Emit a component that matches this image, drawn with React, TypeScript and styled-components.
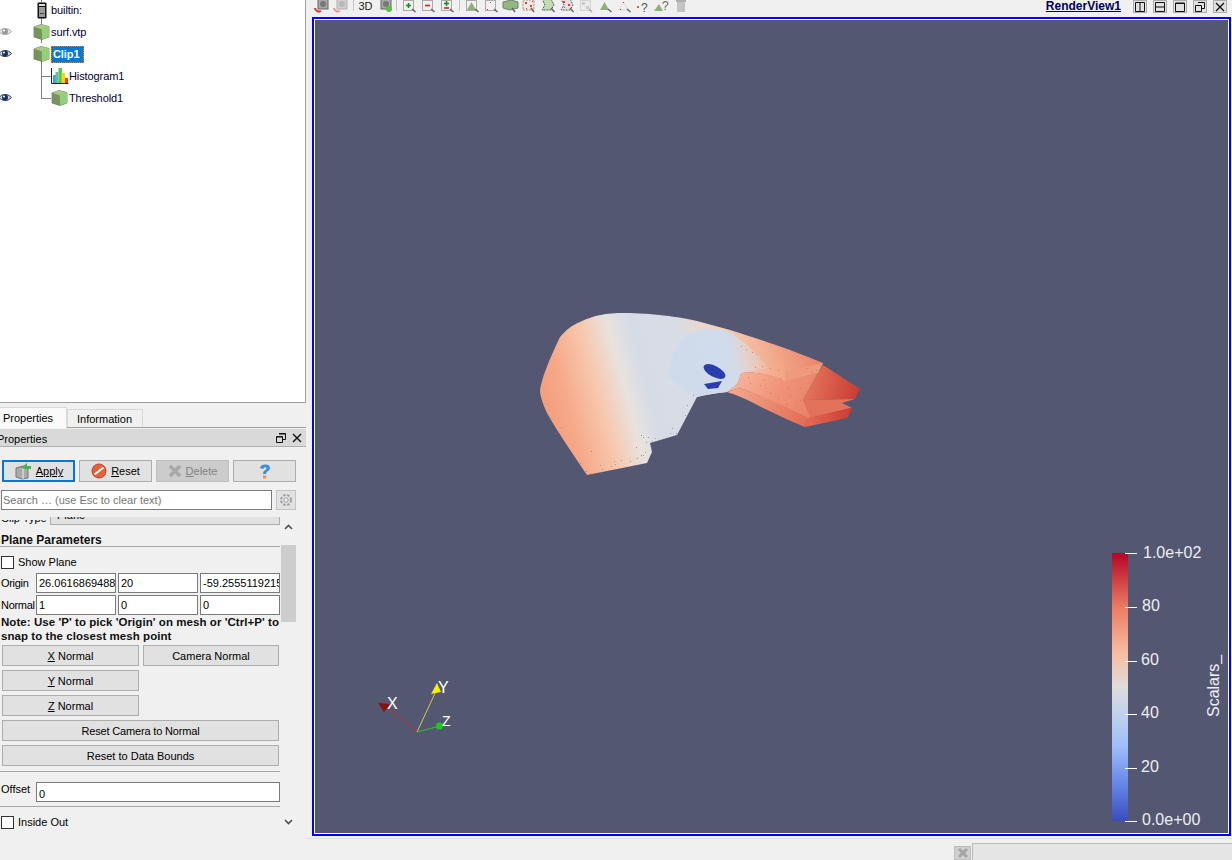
import React from 'react';
import styled, { createGlobalStyle } from 'styled-components';

const Global = createGlobalStyle`
  html, body { margin: 0; padding: 0; background: #f0f0f0; overflow: hidden; }
  #root { width: 1232px; height: 860px; }
`;

const Page = styled.div`
  width: 1232px; height: 860px; display: flex; overflow: hidden; background: #f0f0f0;
  font-family: "Liberation Sans", Arial, sans-serif; font-size: 11px; color: #000;
`;
const LeftDock = styled.div`width: 306px; flex: none; display: flex; flex-direction: column;`;
const Tree = styled.div`
  height: 403px; flex: none; background: #fff; border-right: 1px solid #a0a0a0; border-bottom: 1px solid #a0a0a0;
  box-sizing: border-box; overflow: hidden;
  & > :first-child { margin-top: -1px; }
`;
const TreeRow = styled.div<{ $child?: boolean }>`
  height: 22px; display: flex; align-items: center; position: relative; color: #000030;
  padding-left: ${p => (p.$child ? 51 : 33)}px;
`;
const EyeSlot = styled.span`position: absolute; left: -1px; top: 5px; display: flex;`;
const IconSlot = styled.span`width: 18px; height: 18px; flex: none; display: flex; align-items: center; justify-content: center; position: relative; z-index: 1;`;
const VLine = styled.i<{ $top: number; $h: number }>`
  position: absolute; left: 41px; top: ${p => p.$top}px; height: ${p => p.$h}px; width: 1px; background: #808080;
`;
const HLine = styled.i`position: absolute; left: 41px; top: 11px; width: 10px; height: 1px; background: #808080;`;
const TreeLabel = styled.span<{ $sel?: boolean }>`
  display: inline-block; line-height: 15px; letter-spacing: -0.1px;
  ${p => p.$sel && `background:#0078d7;color:#fff;font-weight:bold;outline:1px dotted #f08020;outline-offset:-1px;line-height:17px;padding:0 5px 0 2px;`}
`;
const TabBar = styled.div`
  flex: none; margin-top: 4px; display: flex; align-items: flex-end; border-bottom: 1px solid #a0a0a0; box-sizing: border-box; width: 306px; height: 21px;
`;
const Tab = styled.div<{ $on?: boolean }>`
  box-sizing: border-box; display: flex; align-items: center; justify-content: center;
  background: ${p => (p.$on ? '#fafafa' : '#f0f0f0')};
  border: 1px solid #d9d9d9; border-bottom: none; border-left: ${p => (p.$on ? 'none' : '1px solid #d9d9d9')};
  width: ${p => (p.$on ? 67 : 76)}px; height: ${p => (p.$on ? 21 : 18)}px; margin-bottom: ${p => (p.$on ? -1 : 0)}px; padding-right: ${p => (p.$on ? 10 : 1)}px;
`;
const TitleBar = styled.div`
  height: 18px; flex: none; margin-top: 1px; background: #d9d9d9; display: flex; align-items: center; border-bottom: 1px solid #b0b0b0; box-sizing: border-box; width: 306px; padding-right: 1px;
`;
const TitleText = styled.span`margin-left: -3px; flex: 1; padding-top: 2px;`;
const TitleIcon = styled.span`width: 16px; display: flex; justify-content: center;`;
const ActionRow = styled.div`display: grid; grid-template-columns: 73px 73px 73px 63px; gap: 4px; padding: 13px 0 0 2px; height: 22px; box-sizing: content-box; flex: none;`;
const Btn = styled.button<{ $primary?: boolean; $disabled?: boolean; $tight?: boolean }>`
  font: inherit; margin: 0; padding: 0; display: flex; align-items: center; justify-content: center; gap: 4px; box-sizing: border-box;
  height: 22px; color: ${p => (p.$disabled ? '#838383' : '#000')};
  background: ${p => (p.$disabled ? '#cccccc' : '#e1e1e1')};
  border: ${p => (p.$primary ? '2px solid #0078d7' : p.$disabled ? '1px solid #bfbfbf' : '1px solid #adadad')};
  letter-spacing: ${p => (p.$tight ? '-0.17px' : 'normal')};
`;
const U = styled.span`text-decoration: underline;`;
const SearchRow = styled.div`display: flex; gap: 4px; padding: 8px 0 0 1px; flex: none; width: 295px;`;
const Search = styled.div`flex: 1; height: 20px; box-sizing: border-box; background: #fff; border: 1px solid #7a7a7a; color: #767676; display: flex; align-items: center; padding-left: 1px;`;
const GearBtn = styled.span`width: 20px; height: 20px; flex: none; box-sizing: border-box; border: 1px solid #c4c4c4; background: #e1e1e1; display: flex; align-items: center; justify-content: center;`;
const ScrollWrap = styled.div`display: flex; height: 315px; margin-top: 7px; width: 296px; flex: none; overflow: hidden;`;
const Content = styled.div`width: 281px; flex: none; overflow: hidden; display: flex; flex-direction: column;`;
const ComboRow = styled.div`display: flex; align-items: flex-end; height: 8px; overflow: hidden; flex: none;`;
const ComboLabel = styled.span`margin-left: 1px; width: 49px; line-height: 13px; flex: none; align-self: flex-end; height: 5px; overflow: hidden; display: block;`;
const ComboLabelInner = styled.span`display:block; margin-top: -8px;`;
const Combo = styled.div`flex: 1; height: 8px; background: #e1e1e1; border: 1px solid #adadad; border-top: none; box-sizing: border-box; overflow: hidden; padding-left: 6px; line-height: 13px; margin-right: 1px;`;
const ComboInner = styled.span`display:block; margin-top: -8px;`;
const SectionHead = styled.div`font-weight: bold; font-size: 12px; line-height: 14px; padding: 8px 0 0 1px; height: 13px; color: #111; flex: none;`;
const Rule = styled.div<{ $mt?: number }>`height: 1px; background: #a8a8a8; flex: none; margin: ${p => p.$mt ?? 0}px 1px 0 0;`;
const CheckRow = styled.div<{ $mt: number }>`display: flex; align-items: center; gap: 4px; margin-top: ${p => p.$mt}px; padding-left: 1px; height: 14px; flex: none;`;
const Check = styled.span`width: 13px; height: 13px; flex: none; box-sizing: border-box; background: #fff; border: 1px solid #333;`;
const FieldRow = styled.div<{ $mt: number }>`display: grid; grid-template-columns: 33px 80px 80px 80px; column-gap: 2px; margin-top: ${p => p.$mt}px; height: 20px; padding-left: 1px; flex: none; align-items: center;`;
const FieldLabel = styled.span`letter-spacing: -0.3px; white-space: nowrap;`;
const Input = styled.div`height: 20px; box-sizing: border-box; background: #fff; border: 1px solid #7a7a7a; padding-left: 2px; display: flex; align-items: center; overflow: hidden; white-space: nowrap;`;
const Note = styled.div`font-weight: bold; font-size: 11.5px; letter-spacing: 0.06px; line-height: 14px; padding-left: 1px; color: #111; flex: none; white-space: nowrap;`;
const BtnGrid = styled.div`display: grid; grid-template-columns: 137px 136px; gap: 4px; padding-left: 2px; margin-top: 2px; flex: none;`;
const GridBtn = styled(Btn)<{ $wide?: boolean }>`height: 21px; ${p => p.$wide && 'grid-column: 1 / 3;'}`;
const OffsetRow = styled.div`display: flex; margin-top: 10px; padding: 0 1px; height: 20px; flex: none;`;
const OffsetLabel = styled.span`width: 35px; flex: none; line-height: 14px;`;
const OffsetInput = styled(Input)`flex: 1; padding-top: 3px;`;
const ScrollBar = styled.div`width: 15px; flex: none; background: #f0f0f0; display: flex; flex-direction: column; align-items: center;`;
const Chevron = styled.span<{ $mt: number }>`height: 15px; display: flex; align-items: center; justify-content: center; flex: none; margin-top: ${p => p.$mt}px;`;
const Thumb = styled.div`width: 15px; height: 77px; background: #cdcdcd; flex: none; margin-top: 11px;`;

const RightCol = styled.div`flex: 1; min-width: 0; display: flex; flex-direction: column;`;
const TopBar = styled.div`height: 17px; flex: none; display: flex; overflow: hidden;`;
const Tools = styled.div`display: flex; flex: 1; align-items: flex-start; padding-left: 6.5px; margin-top: -4px; height: 21px;`;
const Tool = styled.span`width: 19px; height: 18px; display: flex; align-items: center; justify-content: center; flex: none;`;
const ToolSep = styled.span`width: 1px; height: 15px; background: #c4c4c4; flex: none; margin: 0 2.5px 0 2px;`;
const ThreeD = styled.span`font-size: 11px; color: #222; padding-top: 1px;`;
const ViewTitle = styled.span`font-weight: bold; font-size: 12px; text-decoration: underline; color: #00005a; margin-right: 12px; line-height: 13px;`;
const ViewBtns = styled.div`display: flex; gap: 6px; margin-right: 5px;`;
const ViewBtn = styled.span`width: 14px; height: 13px; box-sizing: border-box; border: 1px solid #adadad; background: #e1e1e1; display: flex; align-items: center; justify-content: center;`;
const ViewWrap = styled.div`margin-left: 6px; width: 919px; height: 819px; flex: none; box-sizing: border-box; border: 2px solid #0000ff;`;
const ViewInner = styled.div`width: 100%; height: 100%; box-sizing: border-box; border: 1px solid #fff; background: #545771;`;
const Canvas = styled.svg`display: block; width: 100%; height: 100%;`;
const StatusArea = styled.div`flex: 1; display: flex; justify-content: flex-end; align-items: flex-end; margin-top: 2px; border-top: 1px solid #e0e0da;`;
const StatusBtn = styled.span`width: 17px; height: 14px; margin-right: 1px; background: #cfcfcf; border: 1px solid #bdbdbd; box-sizing: border-box; display: flex; align-items: center; justify-content: center;`;
const StatusBox = styled.div`width: 260px; height: 17px; box-sizing: border-box; background: #e5e5e5; border-top: 1px solid #bdbdbd; border-left: 1px solid #bdbdbd;`;

const Eye = ({ on }: { on?: boolean }) => (
  <svg width="13" height="11" viewBox="0 0 13 11">
    <path d="M0 5.5C3 1.5 9 1.5 12.5 5.5C9 9.5 3 9.5 0 5.5Z" fill={on ? '#cfd6e4' : '#e8e8e8'} stroke={on ? '#30343f' : '#a8a8a8'} />
    <circle cx="6" cy="5.5" r="3" fill={on ? '#17306a' : '#9a9a9a'} />
    <circle cx="5" cy="4.5" r="1" fill="#fff" />
  </svg>
);
const Cube = () => (
  <svg width="18" height="16" viewBox="0 0 18 16">
    <path d="M1 3L8 0.5L16 2.5L16 13L9 15.5L1 13Z" fill="#7da45c" stroke="#5d6b4d" strokeWidth=".7" />
    <path d="M1 3L8.5 5.2L16 2.5L8 0.5Z" fill="#a8cc86" />
    <path d="M8.5 5.2L16 2.5L16 13L9 15.5Z" fill="#93d178" />
    <path d="M1 3L8.5 5.2L9 15.5L1 13Z" fill="#76945b" />
  </svg>
);
const Bars = () => (
  <svg width="18" height="16" viewBox="0 0 18 16">
    <rect x="2" y="7" width="4" height="8" fill="#3aa0e8" />
    <rect x="4.5" y="4" width="3" height="11" fill="#60c0a0" />
    <rect x="7.5" y="0" width="3.5" height="15" fill="#60c050" />
    <rect x="10.5" y="5" width="3.5" height="10" fill="#ffd500" />
    <rect x="14" y="10" width="3" height="5" fill="#f04010" />
    <path d="M.5 0V15.5H17.5" stroke="#222" fill="none" />
  </svg>
);
const Server = () => (
  <svg width="10" height="17" viewBox="0 0 10 17">
    <rect x=".5" y=".5" width="9" height="16" rx="1" fill="#111" />
    <rect x="2" y="2" width="6" height="2" fill="#ddd" />
    <rect x="2" y="5" width="6" height="10" fill="#9a9a9a" />
    <rect x="3" y="11" width="4" height="1" fill="#444" />
  </svg>
);

const DotBox = ({ children }: { children?: React.ReactNode }) => (
  <svg width="18" height="18" viewBox="0 0 18 18">
    <rect x="3.5" y="4.5" width="10" height="10" fill="none" stroke="#666" strokeDasharray="1 1" />
    {children}
    <path d="M12 13L15.5 16" stroke="#666" strokeWidth="1.6" />
  </svg>
);
const Tri = ({ c = '#8fb078' }: { c?: string }) => <path d="M8.5 6L13 14H4Z" fill={c} />;
const RedDots = () => <path d="M8 6h1v1H8zM5 13h1v1H5zM12 13h1v1h-1z" fill="#e03020" />;
const CamIcon = ({ dim, badge }: { dim?: boolean; badge?: boolean }) => (
  <svg width="18" height="18" viewBox="0 0 18 18" opacity={dim ? 0.45 : 1}>
    <rect x="5" y="3" width="10" height="10" fill="#a8a8a8" stroke="#666" />
    <circle cx="10" cy="8" r="3" fill="#777" />
    {badge ? <circle cx="13" cy="13" r="3" fill="#57c040" /> : <path d="M2 12a4 4 0 0 0 6 3" stroke="#d03020" strokeWidth="2" fill="none" />}
  </svg>
);

const toolIcons: React.ReactNode[] = [
  <DotBox key="a"><path d="M6 9.5h5M8.5 7v5" stroke="#109020" strokeWidth="1.6" /></DotBox>,
  <DotBox key="b"><path d="M6 9.5h5" stroke="#d02020" strokeWidth="1.6" /></DotBox>,
  <DotBox key="c"><path d="M6 7.5h5M8.5 5v5" stroke="#109020" strokeWidth="1.5" /><path d="M6 12h5" stroke="#d02020" strokeWidth="1.6" /></DotBox>,
];
const selIcons: React.ReactNode[] = [
  <DotBox key="d"><Tri /></DotBox>,
  <DotBox key="e"><RedDots /></DotBox>,
  <svg key="f" width="18" height="18" viewBox="0 0 18 18"><path d="M2 6L10 4L17 6V12L9 14L2 12Z" fill="#90b880" stroke="#708070" /><path d="M11 12L14 16" stroke="#666" strokeWidth="1.5" /></svg>,
  <svg key="g" width="18" height="18" viewBox="0 0 18 18"><rect x="3" y="4" width="11" height="10" fill="#eee8e0" stroke="#b09080" strokeDasharray="2 1" /><path d="M5 6h2v2H5zM10 9h2v2h-2zM12 5h1v1h-1zM6 12h1v1H6z" fill="#e04030" /><path d="M11 12L14 16" stroke="#666" strokeWidth="1.5" /></svg>,
  <svg key="h" width="18" height="18" viewBox="0 0 18 18"><path d="M3 3L12 3L15 9L12 14L3 14L6 9Z" fill="#c0dcb0" stroke="#555" strokeDasharray="2 1" /><path d="M12 12L15.5 16" stroke="#666" strokeWidth="1.5" /></svg>,
  <svg key="i" width="18" height="18" viewBox="0 0 18 18"><path d="M3 3L12 3L15 9L12 14L3 14L6 9Z" fill="#eee0d8" stroke="#557" strokeDasharray="2 1" /><path d="M5 5h2v2H5zM10 8h2v2h-2zM6 11h1v1H6z" fill="#e04030" /><path d="M12 12L15.5 16" stroke="#666" strokeWidth="1.5" /></svg>,
  <svg key="j" width="18" height="18" viewBox="0 0 18 18" opacity=".5"><rect x="3.5" y="4.5" width="10" height="10" fill="#e8e8e8" stroke="#888" strokeDasharray="1 1" /><path d="M5 6h3v3H5zM9 10h3v3H9z" fill="#9a9" /><path d="M12 13L15 16" stroke="#666" strokeWidth="1.5" /></svg>,
  <svg key="k" width="18" height="18" viewBox="0 0 18 18"><Tri /><path d="M12 13L15.5 16" stroke="#666" strokeWidth="1.6" /></svg>,
  <svg key="l" width="18" height="18" viewBox="0 0 18 18"><path d="M8.5 6L13 14H4Z" fill="#f0f0f0" stroke="#ddd" /><RedDots /><path d="M12 13L15.5 16" stroke="#666" strokeWidth="1.6" /></svg>,
  <svg key="m" width="18" height="18" viewBox="0 0 18 18"><path d="M3 10h2v2H3z" fill="#d06060" /><text x="7" y="16" fontSize="12" fontFamily="Liberation Sans" fill="#555">?</text></svg>,
  <svg key="n" width="18" height="18" viewBox="0 0 18 18"><path d="M6 8L10 15H1Z" fill="#8fb078" /><text x="9" y="14" fontSize="12" fontFamily="Liberation Sans" fill="#666">?</text></svg>,
  <svg key="o" width="18" height="18" viewBox="0 0 18 18"><path d="M5 4h8v12H5z" fill="#c4c4c4" /><path d="M4 4h10v2H4z" fill="#b0b0b0" /><path d="M7 2h4v2H7z" fill="#bcbcbc" /></svg>,
];

const specks: [number, number][] = [
  [561, 427],[555, 433],[591, 451],[580, 463],[586,471],[590,473],[600,465],[602,469],[611,466],[615,464],[621,460],[630,461],[637,458],[643,455],[646,442],[643,437],[641,435],[648,437],[655,438],[652,441],[670,433],[676,433],[672,428],[685,415],[687,405],[693,395],[636,447],[641,455],[645,452],[601,473],[614,461],
];
const warmSpecks: [number, number][] = [
  [741,346],[746,349],[752,352],[762,366],[770,368],[778,370],[755,367],[790,395],[800,400],[778,398],[770,393],[810,412],[820,413],[825,415],[815,418],[760,385],[750,383],[800,388],[788,388],[780,378],[812,372],[806,368],[816,370],[748,377],[764,380],[795,405],[786,404],[810,405],
];
const holeSpecks: [number, number][] = [[708,367],[712,369],[716,372],[720,374],[711,373],[706,370],[710,385],[714,384],[717,386],[708,387],[714,367]];

const labelFont = '"Liberation Sans", Arial, sans-serif';
const Scene = () => (
  <Canvas viewBox="315 20 913 813">
    <defs>
      <linearGradient id="body" gradientUnits="userSpaceOnUse" x1="540" y1="420" x2="830" y2="341">
        <stop offset="0" stopColor="#f39a78" />
        <stop offset=".1" stopColor="#f5a989" />
        <stop offset=".2" stopColor="#f8c5aa" />
        <stop offset=".3" stopColor="#e8e2dd" />
        <stop offset=".37" stopColor="#d6dce6" />
        <stop offset=".52" stopColor="#d8dde5" />
        <stop offset=".65" stopColor="#f4d3bf" />
        <stop offset=".82" stopColor="#f2a688" />
        <stop offset="1" stopColor="#e8785e" />
      </linearGradient>
      <linearGradient id="lobe" gradientUnits="userSpaceOnUse" x1="670" y1="360" x2="770" y2="345">
        <stop offset="0" stopColor="#cfdbeb" />
        <stop offset=".6" stopColor="#d0dbeb" />
        <stop offset="1" stopColor="#e8dcd4" stopOpacity="0" />
      </linearGradient>
      <linearGradient id="lower" gradientUnits="userSpaceOnUse" x1="730" y1="375" x2="815" y2="420">
        <stop offset="0" stopColor="#f9b8a0" />
        <stop offset=".5" stopColor="#f0957a" />
        <stop offset="1" stopColor="#e67f64" />
      </linearGradient>
      <linearGradient id="strip" gradientUnits="userSpaceOnUse" x1="730" y1="390" x2="815" y2="425">
        <stop offset="0" stopColor="#f3a88e" />
        <stop offset="1" stopColor="#e1664e" />
      </linearGradient>
      <linearGradient id="tip" gradientUnits="userSpaceOnUse" x1="805" y1="385" x2="860" y2="395">
        <stop offset="0" stopColor="#e4775c" />
        <stop offset="1" stopColor="#c93a32" />
      </linearGradient>
      <linearGradient id="tip2" gradientUnits="userSpaceOnUse" x1="808" y1="420" x2="852" y2="410">
        <stop offset="0" stopColor="#e36a50" />
        <stop offset="1" stopColor="#c93a32" />
      </linearGradient>
      <linearGradient id="bar" x1="0" y1="0" x2="0" y2="1">
        <stop offset="0" stopColor="#b40426" />
        <stop offset=".2" stopColor="#ea7b60" />
        <stop offset=".38" stopColor="#f7bfa4" />
        <stop offset=".5" stopColor="#dddcdc" />
        <stop offset=".62" stopColor="#bccfee" />
        <stop offset=".72" stopColor="#a0bdfb" />
        <stop offset=".85" stopColor="#6a8ce8" />
        <stop offset="1" stopColor="#3b4cc0" />
      </linearGradient>
    </defs>

    <path fill="url(#body)" d="M587 475C577 460 560 436 547 413C542 402 540 395 540 390C542 378 548 362 560 337C566 330 572 325 580 322C595 315 605 313 625 313C650 313 680 317 697 321L730 330C760 339 800 353 823 363L818 373L785 382C770 373 755 372 741 373L738 383L727 392C715 393 705 395 697 397L677 435L650 443L652 452L647 463Z" />
    <path fill="url(#lobe)" d="M668 373C673 352 677 343 683 337C690 331 700 329 712 329C722 329 732 332 738 338C750 348 760 356 768 368L741 373L738 383L727 392C715 393 705 395 697 397L692 393C682 388 668 380 668 373Z" />
    <path fill="#ef9a7d" d="M785 372L823 363L818 373L785 381Z" />
    <path fill="url(#lower)" d="M741 373C755 372 770 373 785 381L818 373L803 400L815 410L808 420C790 410 760 395 740 388L727 392L738 383Z" />
    <path fill="url(#strip)" d="M740 388C760 395 790 408 808 418L805 427C790 421 778 415 763 408C752 402 740 396 727 392Z" />
    <path fill="url(#tip)" d="M823 365L860 389L855 399L803 400L818 373Z" />
    <path fill="#e2735a" d="M803 400L855 399L842 403L852 408L810 418Z" />
    <path fill="url(#tip2)" d="M808 418L850 408L852 409L847 418L805 427Z" />

    <ellipse cx="714.5" cy="371.5" rx="12" ry="5.5" transform="rotate(28 714.5 371.5)" fill="#2a3fb0" />
    <path d="M704 384L722 381L718 388L708 389Z" fill="#2a3fb0" />
    <g fill="#1e2a70" opacity=".8">
      {holeSpecks.map(([x, y]) => <rect key={`${x}-${y}`} x={x} y={y} width="1" height="1" />)}
    </g>
    <g fill="#888488" opacity=".75">
      {specks.map(([x, y]) => <rect key={`${x}-${y}`} x={x} y={y} width="1" height="1" />)}
    </g>
    <g fill="#d46a50" opacity=".75">
      {warmSpecks.map(([x, y]) => <rect key={`${x}-${y}`} x={x} y={y} width="1" height="1" />)}
    </g>

    <path d="M417 732L386 706" stroke="#c03030" strokeWidth="1" />
    <path d="M417 732L437 689" stroke="#d6cc40" strokeWidth="1" />
    <path d="M417 732L440 726" stroke="#30c030" strokeWidth="1" />
    <path d="M378 703L390 704L384 712Z" fill="#8a0f10" />
    <path d="M437 683L441 692L431 694Z" fill="#f4f000" />
    <circle cx="439.5" cy="726" r="3.6" fill="#10d010" />
    <text x="387" y="709" fontFamily={labelFont} fontSize="16" fill="#fff">X</text>
    <text x="438" y="693" fontFamily={labelFont} fontSize="16" fill="#fff">Y</text>
    <text x="442" y="726" fontFamily={labelFont} fontSize="14" fill="#fff">Z</text>

    <rect x="1112" y="553" width="16" height="268" fill="url(#bar)" />
    <g stroke="#fff" strokeWidth="1">
      <path d="M1125 553.5H1137M1125 607.5H1137M1125 661.5H1137M1125 714.5H1137M1125 768.5H1137M1125 821.5H1137" />
    </g>
    <g fontFamily={labelFont} fontSize="16" fill="#eceef2">
      <text x="1143" y="558">1.0e+02</text>
      <text x="1142" y="611">80</text>
      <text x="1141" y="665">60</text>
      <text x="1141" y="718">40</text>
      <text x="1141" y="772">20</text>
      <text x="1142" y="825">0.0e+00</text>
      <text transform="translate(1219 717) rotate(-90)">Scalars_</text>
    </g>
  </Canvas>
);

export default function App() {
  return (
    <Page>
      <Global />
      <LeftDock>
        <Tree>
          <TreeRow>
            <VLine $top={0} $h={22} />
            <IconSlot><Server /></IconSlot>
            <TreeLabel>builtin:</TreeLabel>
          </TreeRow>
          <TreeRow>
            <EyeSlot><Eye /></EyeSlot>
            <VLine $top={0} $h={22} />
            <IconSlot><Cube /></IconSlot>
            <TreeLabel>surf.vtp</TreeLabel>
          </TreeRow>
          <TreeRow>
            <EyeSlot><Eye on /></EyeSlot>
            <IconSlot><Cube /></IconSlot>
            <TreeLabel $sel>Clip1</TreeLabel>
            <VLine $top={17} $h={5} />
          </TreeRow>
          <TreeRow $child>
            <VLine $top={0} $h={22} />
            <HLine />
            <IconSlot><Bars /></IconSlot>
            <TreeLabel>Histogram1</TreeLabel>
          </TreeRow>
          <TreeRow $child>
            <EyeSlot><Eye on /></EyeSlot>
            <VLine $top={0} $h={12} />
            <HLine />
            <IconSlot><Cube /></IconSlot>
            <TreeLabel>Threshold1</TreeLabel>
          </TreeRow>
        </Tree>
        <TabBar>
          <Tab $on>Properties</Tab>
          <Tab>Information</Tab>
        </TabBar>
        <TitleBar>
          <TitleText>Properties</TitleText>
          <TitleIcon>
            <svg width="10" height="10" viewBox="0 0 10 10"><path d="M3 .5h6.5v6H7M.5 3.5h6v6h-6z" fill="none" stroke="#111" /><path d="M3 1h6.5M.5 4h6" stroke="#111" /></svg>
          </TitleIcon>
          <TitleIcon>
            <svg width="10" height="10" viewBox="0 0 10 10"><path d="M1 1L9 9M9 1L1 9" stroke="#111" strokeWidth="1.4" /></svg>
          </TitleIcon>
        </TitleBar>
        <ActionRow>
          <Btn $primary>
            <svg width="18" height="18" viewBox="0 0 18 18"><path d="M2 6L9 4L14 6V16L8 17L2 15Z" fill="#aaa" stroke="#777" /><path d="M9 6V17" stroke="#eee" /><path d="M7 6L13 1L13 4L17 4L17 7L12 7Z" fill="#45b34a" /></svg>
            <U>Apply</U>
          </Btn>
          <Btn>
            <svg width="16" height="16" viewBox="0 0 16 16"><circle cx="8" cy="8" r="7" fill="#e8603c" stroke="#c0401c" /><path d="M3.5 11.5L12.5 4.5" stroke="#fff" strokeWidth="2" /></svg>
            <span><U>R</U>eset</span>
          </Btn>
          <Btn $disabled>
            <svg width="14" height="14" viewBox="0 0 14 14"><path d="M2 2L12 12M12 2L2 12" stroke="#a8a8a8" strokeWidth="3.4" /></svg>
            <span><U>D</U>elete</span>
          </Btn>
          <Btn>
            <svg width="14" height="16" viewBox="0 0 14 16"><path d="M2 5C2 1 12 0 12 5C12 8 8 8 8 11H5C5 7 9 7 8.5 5C8 3.5 5.5 4 5.5 6Z" fill="#3c8ee0" /><rect x="5" y="12.5" width="3.2" height="3" fill="#e0a030" /></svg>
          </Btn>
        </ActionRow>
        <SearchRow>
          <Search>Search … (use Esc to clear text)</Search>
          <GearBtn>
            <svg width="16" height="16" viewBox="0 0 16 16"><circle cx="8" cy="8" r="5" fill="none" stroke="#a0a0a8" strokeWidth="2" strokeDasharray="2.5 1.5" /><circle cx="8" cy="8" r="2.2" fill="#eee" stroke="#a0a0a8" /></svg>
          </GearBtn>
        </SearchRow>
        <ScrollWrap>
          <Content>
            <ComboRow>
              <ComboLabel><ComboLabelInner>Clip Type</ComboLabelInner></ComboLabel>
              <Combo><ComboInner>Plane</ComboInner></Combo>
            </ComboRow>
            <SectionHead>Plane Parameters</SectionHead>
            <Rule />
            <CheckRow $mt={8}><Check />Show Plane</CheckRow>
            <FieldRow $mt={4}>
              <FieldLabel>Origin</FieldLabel>
              <Input>26.0616869488</Input>
              <Input>20</Input>
              <Input>-59.2555119215</Input>
            </FieldRow>
            <FieldRow $mt={2}>
              <FieldLabel>Normal</FieldLabel>
              <Input>1</Input>
              <Input>0</Input>
              <Input>0</Input>
            </FieldRow>
            <Note>Note: Use 'P' to pick 'Origin' on mesh or 'Ctrl+P' to<br />snap to the closest mesh point</Note>
            <BtnGrid>
              <GridBtn><span><U>X</U> Normal</span></GridBtn>
              <GridBtn>Camera Normal</GridBtn>
              <GridBtn><span><U>Y</U> Normal</span></GridBtn>
              <span />
              <GridBtn><span><U>Z</U> Normal</span></GridBtn>
              <span />
              <GridBtn $wide $tight>Reset Camera to Normal</GridBtn>
              <GridBtn $wide>Reset to Data Bounds</GridBtn>
            </BtnGrid>
            <Rule $mt={5} />
            <OffsetRow>
              <OffsetLabel>Offset</OffsetLabel>
              <OffsetInput>0</OffsetInput>
            </OffsetRow>
            <Rule $mt={4} />
            <CheckRow $mt={8}><Check />Inside Out</CheckRow>
          </Content>
          <ScrollBar>
            <Chevron $mt={2}><svg width="9" height="6" viewBox="0 0 9 6"><path d="M1 5L4.5 1.5L8 5" fill="none" stroke="#505050" strokeWidth="1.6" /></svg></Chevron>
            <Thumb />
            <Chevron $mt={192}><svg width="9" height="6" viewBox="0 0 9 6"><path d="M1 1L4.5 4.5L8 1" fill="none" stroke="#505050" strokeWidth="1.6" /></svg></Chevron>
          </ScrollBar>
        </ScrollWrap>
      </LeftDock>
      <RightCol>
        <TopBar>
          <Tools>
            <Tool><CamIcon /></Tool>
            <Tool><CamIcon dim /></Tool>
            <ToolSep />
            <Tool><ThreeD>3D</ThreeD></Tool>
            <Tool><CamIcon badge /></Tool>
            <ToolSep />
            {toolIcons.map((t, i) => <Tool key={i}>{t}</Tool>)}
            <ToolSep />
            {selIcons.map((t, i) => <Tool key={i}>{t}</Tool>)}
          </Tools>
          <ViewTitle>RenderView1</ViewTitle>
          <ViewBtns>
            <ViewBtn><svg width="10" height="10" viewBox="0 0 10 10"><path d="M.5.5h9v9h-9zM5 .5v9" fill="none" stroke="#111" /></svg></ViewBtn>
            <ViewBtn><svg width="10" height="10" viewBox="0 0 10 10"><path d="M.5.5h9v9h-9zM.5 5h9" fill="none" stroke="#111" /></svg></ViewBtn>
            <ViewBtn><svg width="10" height="10" viewBox="0 0 10 10"><path d="M.5 1h9v8.5h-9z" fill="none" stroke="#111" /><path d="M.5 1.5h9" stroke="#111" /></svg></ViewBtn>
            <ViewBtn><svg width="10" height="10" viewBox="0 0 10 10"><path d="M3 .5h6.5v6H7M.5 3.5h6v6h-6z" fill="none" stroke="#111" /></svg></ViewBtn>
            <ViewBtn><svg width="10" height="10" viewBox="0 0 10 10"><path d="M1 1L9 9M9 1L1 9" stroke="#111" strokeWidth="1.4" /></svg></ViewBtn>
          </ViewBtns>
        </TopBar>
        <ViewWrap>
          <ViewInner><Scene /></ViewInner>
        </ViewWrap>
        <StatusArea>
          <StatusBtn><svg width="12" height="12" viewBox="0 0 12 12"><path d="M2 2L10 10M10 2L2 10" stroke="#a4a4a4" strokeWidth="3" /></svg></StatusBtn>
          <StatusBox />
        </StatusArea>
      </RightCol>
    </Page>
  );
}
